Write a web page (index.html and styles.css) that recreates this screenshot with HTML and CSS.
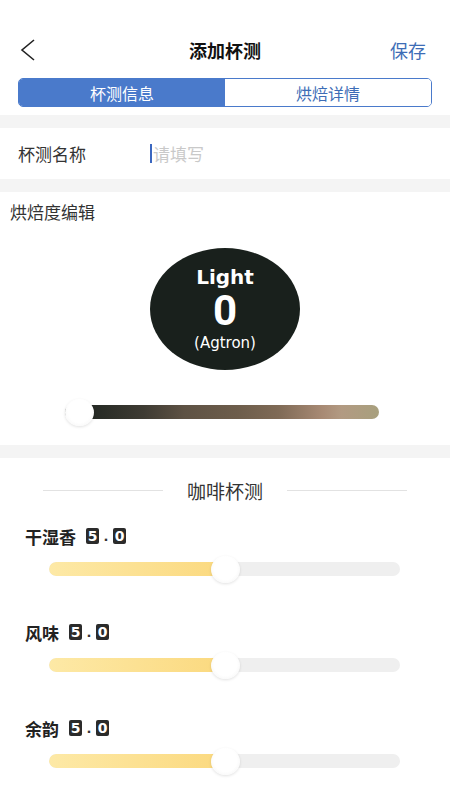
FILE: index.html
```html
<!DOCTYPE html>
<html lang="zh">
<head>
<meta charset="utf-8">
<link rel="stylesheet" href="styles.css">
</head>
<body>
<div class="page">
  <header class="nav">
    <span class="back">
      <svg width="16" height="22" viewBox="0 0 16 22"><polyline points="14,1 2,11 14,21" fill="none" stroke="#222" stroke-width="1.6"/></svg>
    </span>
    <h1 class="title">添加杯测</h1>
    <span class="save">保存</span>
  </header>

  <div class="tabs">
    <div class="tab active">杯测信息</div>
    <div class="tab">烘焙详情</div>
  </div>

  <div class="band"></div>
  <div class="field">
    <span class="field-label">杯测名称</span>
    <span class="input"><span class="caret"></span><span class="placeholder">请填写</span></span>
  </div>
  <div class="band"></div>

  <section class="roast">
    <div class="roast-title">烘焙度编辑</div>
    <div class="roast-ellipse">
      <div class="r-name">Light</div>
      <div class="r-value">0</div>
      <div class="r-unit">(Agtron)</div>
    </div>
    <div class="roast-slider">
      <div class="roast-track"></div>
      <div class="thumb roast-thumb"></div>
    </div>
  </section>

  <div class="band"></div>

  <section class="cupping">
    <div class="divider"><span class="line"></span><span class="divider-text">咖啡杯测</span><span class="line"></span></div>

    <div class="item">
      <div class="item-head"><span class="item-label">干湿香</span><span class="digit">5</span><span class="dot">.</span><span class="digit">0</span></div>
      <div class="slider"><div class="track"><div class="fill" style="width:50%"></div></div><div class="thumb" style="left:50%"></div></div>
    </div>
    <div class="item">
      <div class="item-head"><span class="item-label">风味</span><span class="digit">5</span><span class="dot">.</span><span class="digit">0</span></div>
      <div class="slider"><div class="track"><div class="fill" style="width:50%"></div></div><div class="thumb" style="left:50%"></div></div>
    </div>
    <div class="item">
      <div class="item-head"><span class="item-label">余韵</span><span class="digit">5</span><span class="dot">.</span><span class="digit">0</span></div>
      <div class="slider"><div class="track"><div class="fill" style="width:50%"></div></div><div class="thumb" style="left:50%"></div></div>
    </div>
  </section>
</div>
</body>
</html>
```

FILE: styles.css
```css
* { box-sizing: border-box; }
html, body { margin: 0; padding: 0; background: #fff; }
body {
  font-family: "Noto Sans CJK SC", "Noto Sans", sans-serif;
  color: #222;
  width: 450px;
  height: 800px;
  overflow: hidden;
}
.page { display: flex; flex-direction: column; }

.nav {
  margin-top: 30px;
  height: 40px;
  display: flex;
  align-items: center;
  justify-content: space-between;
  padding: 0 24px 0 20px;
  position: relative;
}
.back { display: flex; width: 16px; height: 22px; }
.title {
  margin: 0;
  position: absolute;
  left: 0; right: 0;
  text-align: center;
  font-size: 18px;
  font-weight: 700;
  color: #111;
  pointer-events: none;
}
.save { font-size: 18px; color: #3d6db6; }

.tabs {
  margin: 8px 18px 0 18px;
  height: 29px;
  display: flex;
  border: 1px solid #4a7acb;
  border-radius: 5px;
  overflow: hidden;
}
.tab {
  flex: 1;
  display: flex;
  align-items: center;
  justify-content: center;
  font-size: 16px;
  color: #3d6db6;
  background: #fff;
}
.tab.active { background: #4a7acb; color: #fff; }

.band { height: 13px; background: #f4f4f4; }
.tabs + .band { margin-top: 8px; }

.field {
  height: 51px;
  display: flex;
  align-items: center;
  padding-left: 18px;
}
.field-label { width: 132px; font-size: 17px; color: #333; }
.input { display: flex; align-items: center; }
.caret { width: 2px; height: 19px; background: #3b67c0; margin-right: 1px; }
.placeholder { font-size: 17px; color: #c9c9c9; }

.roast { padding: 10px 0 18px; display: flex; flex-direction: column; }
.roast-title { padding-left: 10px; font-size: 17px; line-height: 20px; color: #333; }
.roast-ellipse {
  align-self: center;
  margin-top: 26px;
  width: 150px;
  height: 122px;
  border-radius: 50%;
  background: #19201c;
  color: #fff;
  display: flex;
  flex-direction: column;
  align-items: center;
  justify-content: center;
  font-family: "DejaVu Sans", sans-serif;
}
.r-name { font-size: 20px; font-weight: 700; line-height: 24px; }
.r-value { font-family: Roboto, "DejaVu Sans", sans-serif; font-size: 42px; font-weight: 700; line-height: 44px; }
.r-unit { font-size: 15px; line-height: 20px; }

.roast-slider {
  position: relative;
  margin: 27px 71px 0 65px;
  height: 30px;
  display: flex;
  align-items: center;
}
.roast-track {
  flex: 1;
  height: 14px;
  border-radius: 7px;
  background: linear-gradient(to right, #1c221e 0%, #2a2d27 12%, #3e3b33 25%, #5e5244 38%, #6d5d4b 55%, #7f6a56 68%, #a88a74 82%, #b29a82 88%, #a8a07e 100%);
}
.thumb {
  position: absolute;
  top: 50%;
  width: 29px;
  height: 27px;
  margin-left: -14px;
  margin-top: -13.5px;
  border-radius: 50%;
  background: radial-gradient(circle at 50% 45%, #ffffff 55%, #f1f1f1 100%);
  box-shadow: 0 1px 3px rgba(0,0,0,0.12);
}
.roast-thumb { left: 14px; }

.cupping { display: flex; flex-direction: column; }
.divider {
  margin: 20px 43px 0;
  height: 24px;
  display: flex;
  align-items: center;
}
.line { flex: 1; height: 1px; background: #e2e2e2; }
.divider-text { padding: 0 24px; font-size: 19px; color: #333; }

.item { margin-top: 24px; display: flex; flex-direction: column; }
.item + .item { margin-top: 38px; }
.item-head {
  height: 20px;
  display: flex;
  align-items: center;
  padding-left: 25px;
}
.item-label { font-size: 17px; font-weight: 700; color: #222; margin-right: 10px; }
.digit {
  width: 13px;
  height: 16px;
  background: #2b2b2b;
  border-radius: 2px;
  color: #fff;
  font-family: "DejaVu Sans", sans-serif;
  font-weight: 700;
  font-size: 14px;
  display: flex;
  align-items: center;
  justify-content: center;
}
.dot {
  width: 14px;
  text-align: center;
  font-family: "DejaVu Sans", sans-serif;
  font-weight: 700;
  font-size: 13px;
  color: #333;
}

.slider {
  position: relative;
  margin: 8px 50px 0 49px;
  height: 30px;
  display: flex;
  align-items: center;
}
.track {
  flex: 1;
  height: 14px;
  border-radius: 7px;
  background: #efefef;
  overflow: hidden;
}
.fill {
  height: 100%;
  border-radius: 7px;
  background: linear-gradient(to right, #fde9a6, #fbd97f);
}
```
